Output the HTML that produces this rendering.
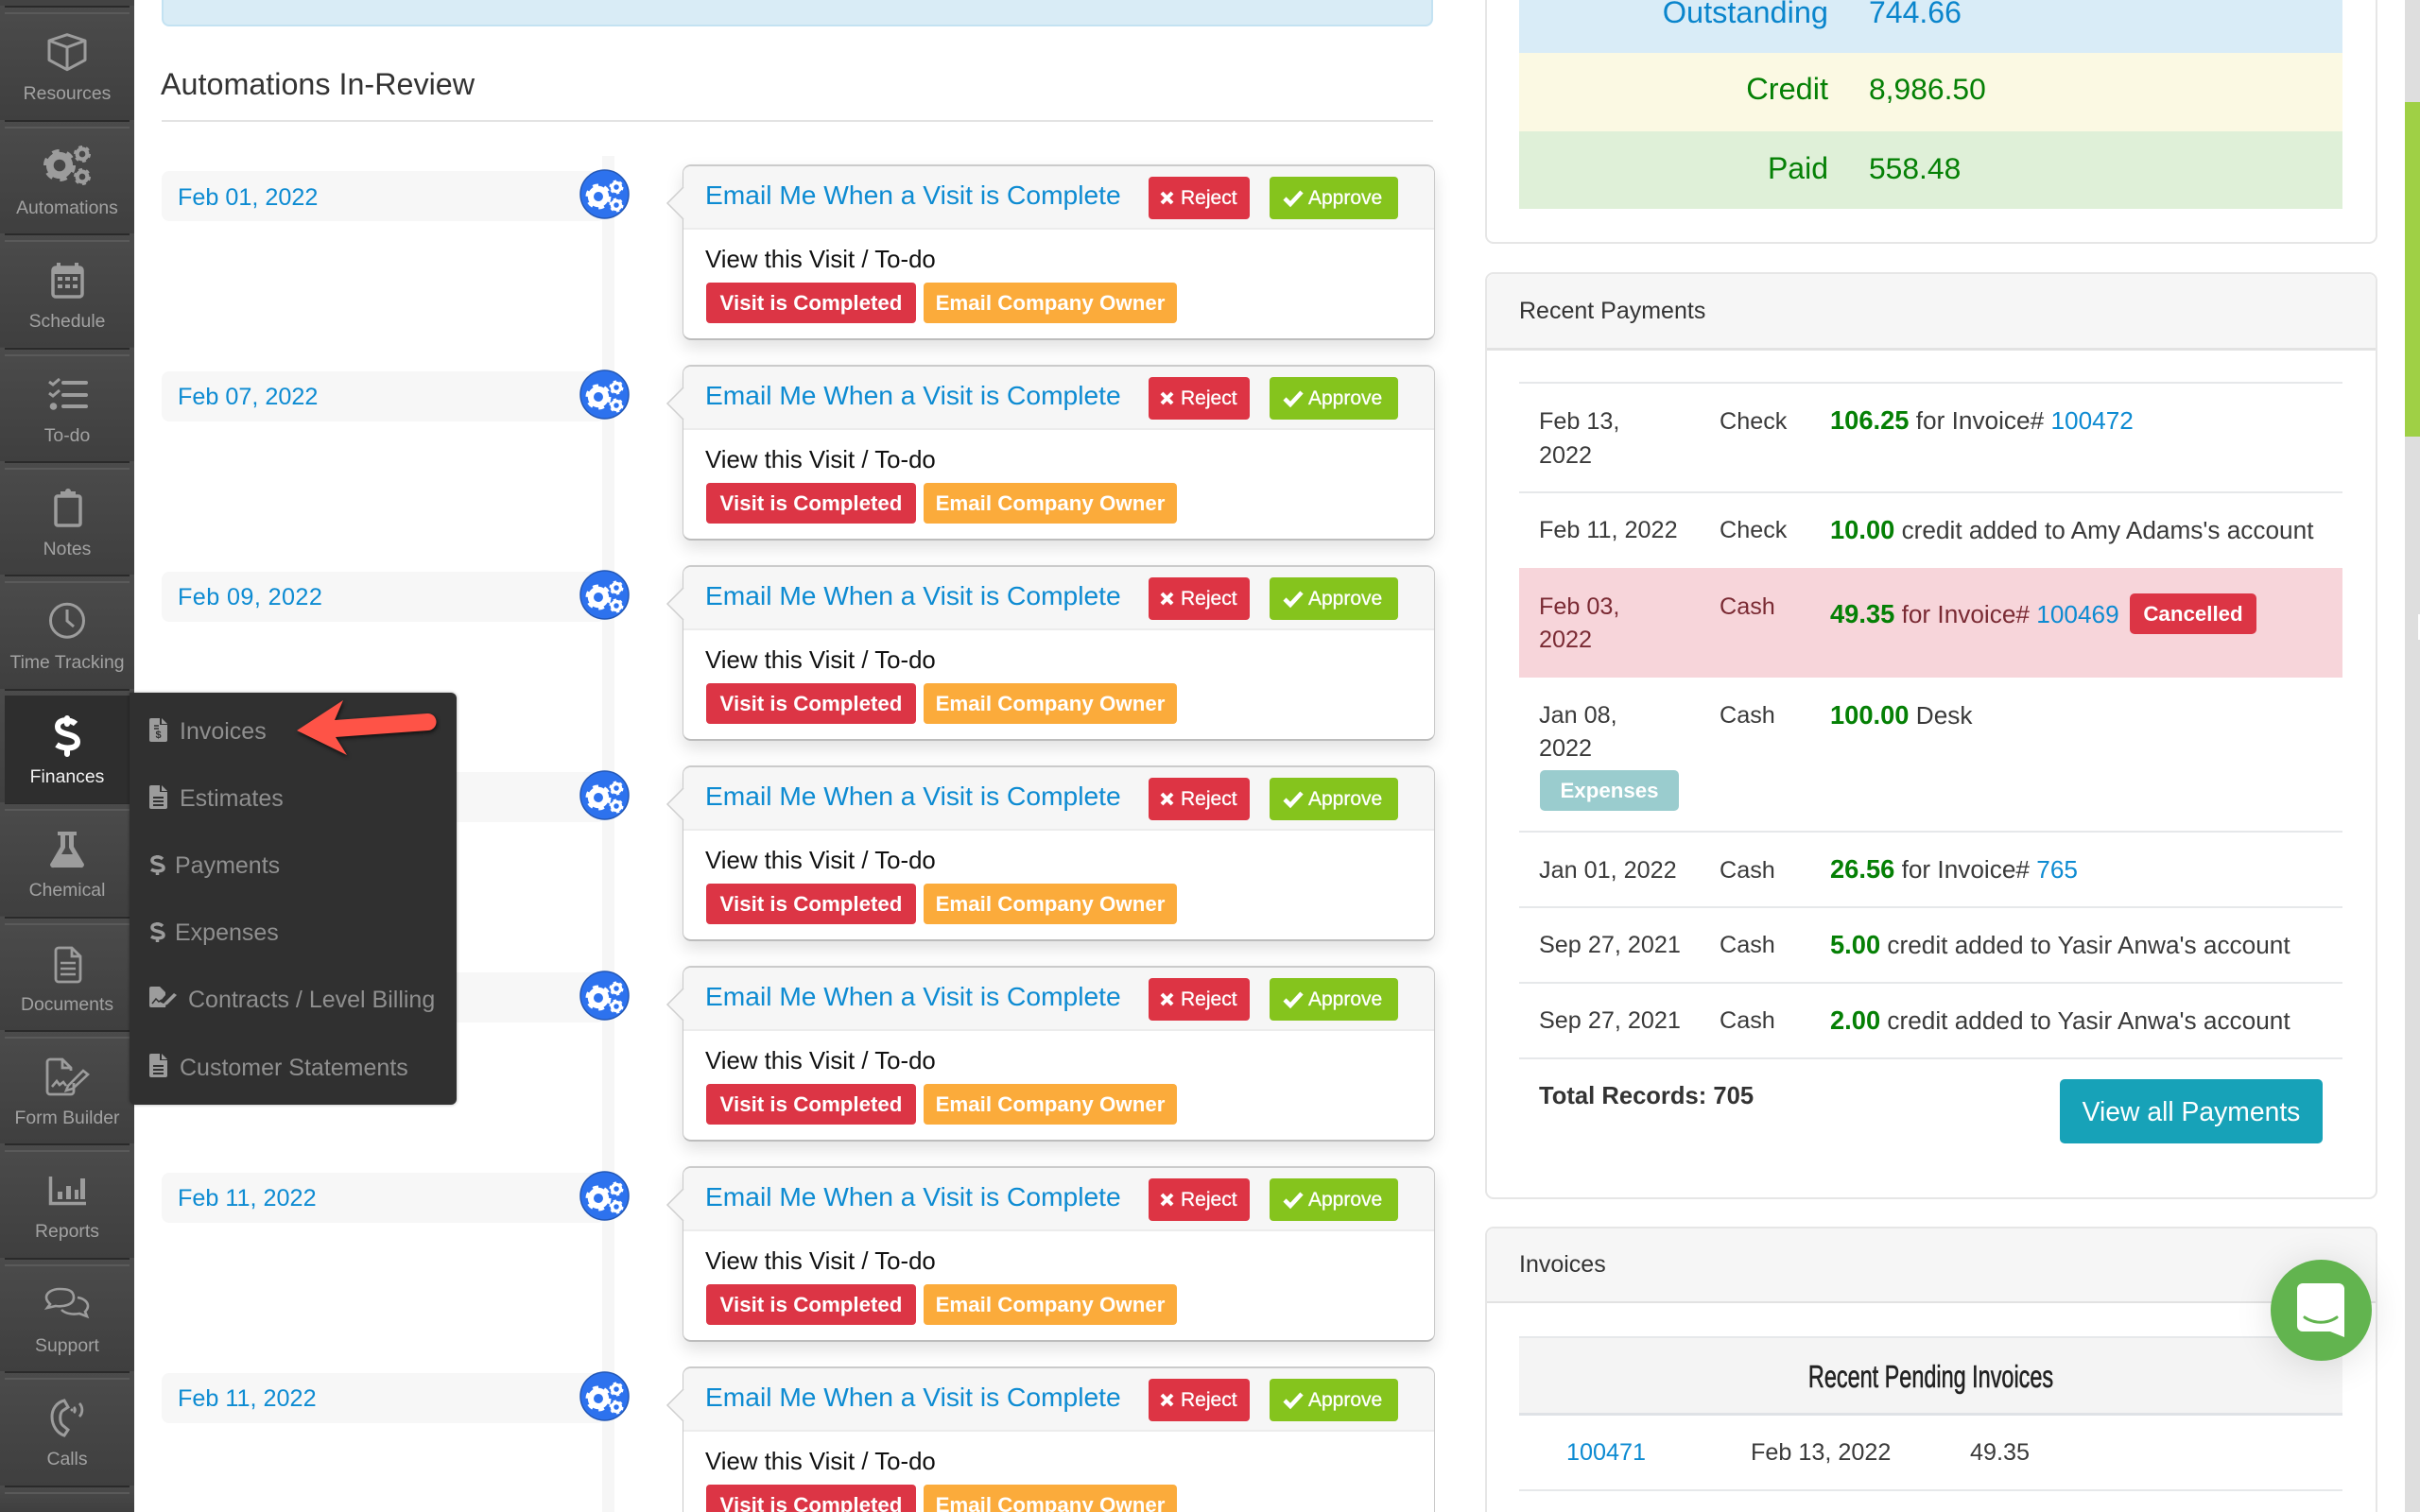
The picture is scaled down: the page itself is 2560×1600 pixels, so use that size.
<!DOCTYPE html>
<html><head><meta charset="utf-8"><title>Automations In-Review</title>
<style>
html,body{margin:0;padding:0;background:#fff;width:2560px;height:1600px;overflow:hidden}
#root{position:relative;width:2560px;height:1600px;overflow:hidden;font-family:"Liberation Sans",sans-serif;color:#3a3a3a}
.a,.t{position:absolute;white-space:nowrap}
.t{line-height:40px}
a{color:#0d8bd2;text-decoration:none}
#side{position:absolute;left:0;top:0;width:142px;height:1600px;background:#434343}
.si{position:absolute;left:0;width:142px;height:120.4px;background:linear-gradient(#4b4b4b,#3f3f3f)}
.si:before{content:"";position:absolute;left:5px;right:5px;top:0;height:2px;background:#2a2a2a}
.si:after{content:"";position:absolute;left:5px;right:5px;top:7px;height:2px;background:#5a5a5a}
.si span{position:absolute;left:0;width:142px;top:80px;text-align:center;font-size:19.4px;line-height:26px;color:#a2a2a2}
.si svg{position:absolute;left:0;top:0}
#act{position:absolute;left:5px;top:736px;width:132px;height:114px;background:#2e2e2e}
#act span{position:absolute;left:0;width:132px;top:72px;text-align:center;font-size:19.4px;line-height:28px;color:#f2f2f2}
#sub{position:absolute;left:137px;top:733px;width:346px;height:436px;background:#303030;border-radius:0 6px 6px 6px;box-shadow:0 0 3px rgba(0,0,0,.35)}
.m{position:absolute;font-size:25px;line-height:36px;color:#8f8f8f;white-space:nowrap;margin-top:1px}
.bar{position:absolute;left:171px;width:469px;height:53px;background:#f7f7f7;border-radius:8px}
.d{position:absolute;left:188px;font-size:25.2px;line-height:40px;color:#0d8bd2;margin-top:1px}
.ic{position:absolute;left:613px;width:53px;height:53px}
.card{position:absolute;left:722px;width:796px;height:186px;box-sizing:border-box;background:#fff;border:1px solid #c9c9c9;border-top:2px solid #cbcbcb;border-bottom:2px solid #bdbdbd;border-radius:9px;box-shadow:0 8px 18px rgba(0,0,0,.12)}
.hd{position:absolute;left:0;right:0;top:0;height:65px;background:#f6f6f6;border-bottom:2px solid #ececec;border-radius:8px 8px 0 0}
.ti{position:absolute;left:23px;top:10px;font-size:28.2px;line-height:40px;color:#0d8bd2;white-space:nowrap}
.bt{position:absolute;top:11px;height:45px;border-radius:4px;color:#fff;font-size:21px;line-height:45px;-webkit-text-stroke:.3px #fff;white-space:nowrap}
.rj{left:492px;width:107px;background:#dd3444}
.ap{left:620px;width:136px;background:#85c41d}
.bt svg{position:absolute;top:0;left:0}
.vw{position:absolute;left:23px;top:79px;font-size:25.8px;line-height:40px;color:#111;white-space:nowrap}
.bg{position:absolute;top:123px;height:43px;border-radius:4px;color:#fff;font-weight:bold;font-size:22.3px;line-height:43px;text-align:center;white-space:nowrap}
.b1{left:24px;width:222px;background:#dc3545}
.b2{left:254px;width:268px;background:#fbab3b}
.nub{position:absolute;left:-19px;top:19px}
.pn{position:absolute;left:1571px;width:944px;box-sizing:border-box;border:2px solid #e6e6e6;background:#fff}
.ph{position:absolute;left:0;right:0;top:0;background:#f6f6f6;border-bottom:3px solid #e2e2e2}
.ln{position:absolute;left:1607px;width:871px;height:2px;background:#e6e8ea}
.g{color:#058005;font-weight:bold;font-size:27.3px}
.f{font-size:25.2px;margin-top:1px}
.x{font-size:26.2px;margin-top:1px}
</style></head><body><div id="root">

<svg width="0" height="0" style="position:absolute"><defs>
<g id="gear" fill="none" stroke="currentColor"><circle r=".6" stroke-width=".46"/><circle r=".88" stroke-width=".24" stroke-dasharray=".44 .48"/></g>
<g id="file"><path d="M0 2a2 2 0 0 1 2-2h9v7h8v16a2 2 0 0 1-2 2H2a2 2 0 0 1-2-2zM13 0l6 6h-6z" fill="#9c9c9c"/></g>
</defs></svg>

<div id="side">
<div class="si" style="top:6.3px"><svg width="142" height="120"><path d="M52 37 71 30.7 90 37V57.5L71 67.7 52 57.5ZM52 37 71 44 90 37M71 44V67.7" fill="none" stroke="#9c9c9c" stroke-width="3" stroke-linejoin="round"/></svg><span>Resources</span></div>
<div class="si" style="top:126.7px"><svg width="142" height="120" style="color:#9c9c9c"><use href="#gear" transform="translate(63 48) scale(17)"/><use href="#gear" transform="translate(87 36) scale(9)"/><use href="#gear" transform="translate(87 60) scale(9)"/></svg><span>Automations</span></div>
<div class="si" style="top:247px"><svg width="142" height="120"><rect x="56" y="36" width="31" height="31" rx="3" fill="none" stroke="#9c9c9c" stroke-width="3.5"/><rect x="56" y="36" width="31" height="7" fill="#9c9c9c"/><path d="M62 31v6M81 31v6" stroke="#9c9c9c" stroke-width="4"/><path d="M61 48h5M69 48h5M77 48h5M61 56h5M69 56h5M77 56h5" stroke="#9c9c9c" stroke-width="4"/></svg><span>Schedule</span></div>
<div class="si" style="top:367.5px"><svg width="142" height="120"><path d="M67 37h24M67 50h24M67 62h24" stroke="#9c9c9c" stroke-width="4" stroke-linecap="round"/><path d="M52 36l4 3 7-6M52 48l4 3 7-6" fill="none" stroke="#9c9c9c" stroke-width="3"/><circle cx="56.5" cy="62" r="3.8" fill="#9c9c9c"/></svg><span>To-do</span></div>
<div class="si" style="top:488px"><svg width="142" height="120"><rect x="59" y="37" width="26" height="31" rx="2" fill="none" stroke="#9c9c9c" stroke-width="3.5"/><path d="M64 38v-6h5a3 3 0 0 1 6 0h5v6z" fill="#9c9c9c"/></svg><span>Notes</span></div>
<div class="si" style="top:608.3px"><svg width="142" height="120"><circle cx="71" cy="48.7" r="17.5" fill="none" stroke="#9c9c9c" stroke-width="3"/><path d="M71 37v12l7 6" fill="none" stroke="#9c9c9c" stroke-width="3"/></svg><span>Time Tracking</span></div>
<div class="si" style="top:728.7px"></div>
<div class="si" style="top:849px"><svg width="142" height="120"><path d="M61 31h20v4h-3v12l10 17a3 3 0 0 1-3 5H57a3 3 0 0 1-3-5l10-17V35h-3z" fill="#9c9c9c"/><path d="M69 35v13l-4 7h12l-4-7V35z" fill="#4a4a4a"/><path d="M64 56h14l6 10H58z" fill="#9c9c9c"/></svg><span>Chemical</span></div>
<div class="si" style="top:969.5px"><svg width="142" height="120"><path d="M59 36a3 3 0 0 1 3-3h14l9 9v24a3 3 0 0 1-3 3H62a3 3 0 0 1-3-3zM76 33v9h9" fill="none" stroke="#9c9c9c" stroke-width="2.8"/><path d="M64 49h16M64 55h16M64 61h16" stroke="#9c9c9c" stroke-width="2.5"/></svg><span>Documents</span></div>
<div class="si" style="top:1090px"><svg width="142" height="120"><path d="M78 56v9a3 3 0 0 1-3 3H53a3 3 0 0 1-3-3V34a3 3 0 0 1 3-3h13l9 9v3M66 31v9h9" fill="none" stroke="#9c9c9c" stroke-width="2.8"/><path d="M72 59 88 43l5 4-16 15-7 2zM55 60l5-6 3 4 4-3 3 4" fill="none" stroke="#9c9c9c" stroke-width="2.6"/></svg><span>Form Builder</span></div>
<div class="si" style="top:1210.3px"><svg width="142" height="120"><path d="M53.5 35v28.5H91" fill="none" stroke="#9c9c9c" stroke-width="3.5"/><path d="M61 51h5v8h-5zM70 45h5v14h-5zM79 49h4v10h-4zM85 37h5v22h-5z" fill="#9c9c9c"/></svg><span>Reports</span></div>
<div class="si" style="top:1330.7px"><svg width="142" height="120"><path d="M63 33c-8 0-14 4-14 9 0 3 2 5 4 7l-3 4 9-2c8 1 19-1 19-9s-7-9-15-9z" fill="none" stroke="#9c9c9c" stroke-width="2.6"/><path d="M82 42c7 1 11 5 11 9 0 3-2 5-3 6l2 5-8-3c-5 1-14 1-19-4" fill="none" stroke="#9c9c9c" stroke-width="2.6"/></svg><span>Support</span></div>
<div class="si" style="top:1451px;height:120.5px"><svg width="142" height="120"><path d="M68 31c-8 2-13 9-13 17 0 10 6 18 13 20l4-6-6-5c-3-3-3-12 0-15l6-4-4-7z" fill="none" stroke="#9c9c9c" stroke-width="3"/><path d="M78 38a4 4 0 0 1 0 6M84 34a10 10 0 0 1 0 14" fill="none" stroke="#9c9c9c" stroke-width="2.8"/><circle cx="76" cy="41" r="1.5" fill="#9c9c9c"/></svg><span>Calls</span></div>
<div class="si" style="top:1571.5px;height:28.5px"></div>
<div id="act"><svg width="132" height="72" style="position:absolute;left:0;top:0"><path d="M75 30c-5-5-19-6-19 3 0 10 21 6 21 16 0 8-15 8-22 3" fill="none" stroke="#fff" stroke-width="6"/><path d="M66 24v6M66 56v6" stroke="#fff" stroke-width="6" stroke-linecap="round"/></svg><span>Finances</span></div>
</div>

<!-- alert -->
<div class="a" style="left:171px;top:-10px;width:1345px;height:38px;box-sizing:border-box;background:#d9ecf6;border:2px solid #c3e2f2;border-radius:8px"></div>
<div class="t" style="left:170px;top:69px;font-size:32.3px;color:#333">Automations In-Review</div>
<div class="a" style="left:171px;top:127px;width:1345px;height:2px;background:#e3e3e3"></div>
<div class="a" style="left:637px;top:165px;width:13px;height:1435px;background:#f6f6f6"></div>

<!-- date bars -->
<div class="bar" style="top:181px"></div><div class="d" style="top:188px">Feb 01, 2022</div>
<div class="bar" style="top:393px"></div><div class="d" style="top:399px">Feb 07, 2022</div>
<div class="bar" style="top:605px"></div><div class="d" style="top:611px;letter-spacing:.4px">Feb 09, 2022</div>
<div class="bar" style="top:817px"></div>
<div class="bar" style="top:1029px"></div>
<div class="bar" style="top:1241px"></div><div class="d" style="top:1247px">Feb 11, 2022</div>
<div class="bar" style="top:1453px"></div><div class="d" style="top:1459px">Feb 11, 2022</div>

<!-- circle icons -->
<svg class="ic" style="top:179px" viewBox="0 0 53 53"><circle cx="26.5" cy="26.5" r="25.5" fill="#2d72ee" stroke="#2357b5" stroke-width="1.5"/><g style="color:#fff"><use href="#gear" transform="translate(20 29) scale(13.5)"/><use href="#gear" transform="translate(39 19) scale(7.5)"/><use href="#gear" transform="translate(39 38) scale(7.5)"/></g></svg>
<svg class="ic" style="top:391px" viewBox="0 0 53 53"><circle cx="26.5" cy="26.5" r="25.5" fill="#2d72ee" stroke="#2357b5" stroke-width="1.5"/><g style="color:#fff"><use href="#gear" transform="translate(20 29) scale(13.5)"/><use href="#gear" transform="translate(39 19) scale(7.5)"/><use href="#gear" transform="translate(39 38) scale(7.5)"/></g></svg>
<svg class="ic" style="top:603px" viewBox="0 0 53 53"><circle cx="26.5" cy="26.5" r="25.5" fill="#2d72ee" stroke="#2357b5" stroke-width="1.5"/><g style="color:#fff"><use href="#gear" transform="translate(20 29) scale(13.5)"/><use href="#gear" transform="translate(39 19) scale(7.5)"/><use href="#gear" transform="translate(39 38) scale(7.5)"/></g></svg>
<svg class="ic" style="top:815px" viewBox="0 0 53 53"><circle cx="26.5" cy="26.5" r="25.5" fill="#2d72ee" stroke="#2357b5" stroke-width="1.5"/><g style="color:#fff"><use href="#gear" transform="translate(20 29) scale(13.5)"/><use href="#gear" transform="translate(39 19) scale(7.5)"/><use href="#gear" transform="translate(39 38) scale(7.5)"/></g></svg>
<svg class="ic" style="top:1027px" viewBox="0 0 53 53"><circle cx="26.5" cy="26.5" r="25.5" fill="#2d72ee" stroke="#2357b5" stroke-width="1.5"/><g style="color:#fff"><use href="#gear" transform="translate(20 29) scale(13.5)"/><use href="#gear" transform="translate(39 19) scale(7.5)"/><use href="#gear" transform="translate(39 38) scale(7.5)"/></g></svg>
<svg class="ic" style="top:1239px" viewBox="0 0 53 53"><circle cx="26.5" cy="26.5" r="25.5" fill="#2d72ee" stroke="#2357b5" stroke-width="1.5"/><g style="color:#fff"><use href="#gear" transform="translate(20 29) scale(13.5)"/><use href="#gear" transform="translate(39 19) scale(7.5)"/><use href="#gear" transform="translate(39 38) scale(7.5)"/></g></svg>
<svg class="ic" style="top:1451px" viewBox="0 0 53 53"><circle cx="26.5" cy="26.5" r="25.5" fill="#2d72ee" stroke="#2357b5" stroke-width="1.5"/><g style="color:#fff"><use href="#gear" transform="translate(20 29) scale(13.5)"/><use href="#gear" transform="translate(39 19) scale(7.5)"/><use href="#gear" transform="translate(39 38) scale(7.5)"/></g></svg>

<!-- cards -->
<div class="card" style="top:174px"><div class="hd"></div><svg class="nub" width="20" height="40"><path d="M19 3 2 20 19 37z" fill="#f6f6f6"/><path d="M19 3 2 20 19 37" fill="none" stroke="#cfcfcf" stroke-width="1.5"/></svg><div class="ti">Email Me When a Visit is Complete</div><div class="bt rj"><svg width="40" height="45"><path d="M14 17l11 11M25 17 14 28" stroke="#fff" stroke-width="4"/></svg><span style="position:absolute;left:34px">Reject</span></div><div class="bt ap"><svg width="40" height="45"><path d="M16 23l6 6 12-13" fill="none" stroke="#fff" stroke-width="4.5"/></svg><span style="position:absolute;left:41px">Approve</span></div><div class="vw">View this Visit / To-do</div><div class="bg b1">Visit is Completed</div><div class="bg b2">Email Company Owner</div></div>
<div class="card" style="top:386px"><div class="hd"></div><svg class="nub" width="20" height="40"><path d="M19 3 2 20 19 37z" fill="#f6f6f6"/><path d="M19 3 2 20 19 37" fill="none" stroke="#cfcfcf" stroke-width="1.5"/></svg><div class="ti">Email Me When a Visit is Complete</div><div class="bt rj"><svg width="40" height="45"><path d="M14 17l11 11M25 17 14 28" stroke="#fff" stroke-width="4"/></svg><span style="position:absolute;left:34px">Reject</span></div><div class="bt ap"><svg width="40" height="45"><path d="M16 23l6 6 12-13" fill="none" stroke="#fff" stroke-width="4.5"/></svg><span style="position:absolute;left:41px">Approve</span></div><div class="vw">View this Visit / To-do</div><div class="bg b1">Visit is Completed</div><div class="bg b2">Email Company Owner</div></div>
<div class="card" style="top:598px"><div class="hd"></div><svg class="nub" width="20" height="40"><path d="M19 3 2 20 19 37z" fill="#f6f6f6"/><path d="M19 3 2 20 19 37" fill="none" stroke="#cfcfcf" stroke-width="1.5"/></svg><div class="ti">Email Me When a Visit is Complete</div><div class="bt rj"><svg width="40" height="45"><path d="M14 17l11 11M25 17 14 28" stroke="#fff" stroke-width="4"/></svg><span style="position:absolute;left:34px">Reject</span></div><div class="bt ap"><svg width="40" height="45"><path d="M16 23l6 6 12-13" fill="none" stroke="#fff" stroke-width="4.5"/></svg><span style="position:absolute;left:41px">Approve</span></div><div class="vw">View this Visit / To-do</div><div class="bg b1">Visit is Completed</div><div class="bg b2">Email Company Owner</div></div>
<div class="card" style="top:810px"><div class="hd"></div><svg class="nub" width="20" height="40"><path d="M19 3 2 20 19 37z" fill="#f6f6f6"/><path d="M19 3 2 20 19 37" fill="none" stroke="#cfcfcf" stroke-width="1.5"/></svg><div class="ti">Email Me When a Visit is Complete</div><div class="bt rj"><svg width="40" height="45"><path d="M14 17l11 11M25 17 14 28" stroke="#fff" stroke-width="4"/></svg><span style="position:absolute;left:34px">Reject</span></div><div class="bt ap"><svg width="40" height="45"><path d="M16 23l6 6 12-13" fill="none" stroke="#fff" stroke-width="4.5"/></svg><span style="position:absolute;left:41px">Approve</span></div><div class="vw">View this Visit / To-do</div><div class="bg b1">Visit is Completed</div><div class="bg b2">Email Company Owner</div></div>
<div class="card" style="top:1022px"><div class="hd"></div><svg class="nub" width="20" height="40"><path d="M19 3 2 20 19 37z" fill="#f6f6f6"/><path d="M19 3 2 20 19 37" fill="none" stroke="#cfcfcf" stroke-width="1.5"/></svg><div class="ti">Email Me When a Visit is Complete</div><div class="bt rj"><svg width="40" height="45"><path d="M14 17l11 11M25 17 14 28" stroke="#fff" stroke-width="4"/></svg><span style="position:absolute;left:34px">Reject</span></div><div class="bt ap"><svg width="40" height="45"><path d="M16 23l6 6 12-13" fill="none" stroke="#fff" stroke-width="4.5"/></svg><span style="position:absolute;left:41px">Approve</span></div><div class="vw">View this Visit / To-do</div><div class="bg b1">Visit is Completed</div><div class="bg b2">Email Company Owner</div></div>
<div class="card" style="top:1234px"><div class="hd"></div><svg class="nub" width="20" height="40"><path d="M19 3 2 20 19 37z" fill="#f6f6f6"/><path d="M19 3 2 20 19 37" fill="none" stroke="#cfcfcf" stroke-width="1.5"/></svg><div class="ti">Email Me When a Visit is Complete</div><div class="bt rj"><svg width="40" height="45"><path d="M14 17l11 11M25 17 14 28" stroke="#fff" stroke-width="4"/></svg><span style="position:absolute;left:34px">Reject</span></div><div class="bt ap"><svg width="40" height="45"><path d="M16 23l6 6 12-13" fill="none" stroke="#fff" stroke-width="4.5"/></svg><span style="position:absolute;left:41px">Approve</span></div><div class="vw">View this Visit / To-do</div><div class="bg b1">Visit is Completed</div><div class="bg b2">Email Company Owner</div></div>
<div class="card" style="top:1446px;height:154px;border-bottom:0;border-radius:9px 9px 0 0;box-shadow:none"><div class="hd"></div><svg class="nub" width="20" height="40"><path d="M19 3 2 20 19 37z" fill="#f6f6f6"/><path d="M19 3 2 20 19 37" fill="none" stroke="#cfcfcf" stroke-width="1.5"/></svg><div class="ti">Email Me When a Visit is Complete</div><div class="bt rj"><svg width="40" height="45"><path d="M14 17l11 11M25 17 14 28" stroke="#fff" stroke-width="4"/></svg><span style="position:absolute;left:34px">Reject</span></div><div class="bt ap"><svg width="40" height="45"><path d="M16 23l6 6 12-13" fill="none" stroke="#fff" stroke-width="4.5"/></svg><span style="position:absolute;left:41px">Approve</span></div><div class="vw">View this Visit / To-do</div><div class="bg b1" style="height:29px;overflow:hidden;border-radius:4px 4px 0 0">Visit is Completed</div><div class="bg b2" style="height:29px;overflow:hidden;border-radius:4px 4px 0 0">Email Company Owner</div></div>

<!-- submenu -->
<div id="sub">
<div class="m" style="left:53px;top:22px">Invoices</div>
<div class="m" style="left:53px;top:93px">Estimates</div>
<div class="m" style="left:48px;top:164px">Payments</div>
<div class="m" style="left:48px;top:235px">Expenses</div>
<div class="m" style="left:62px;top:306px">Contracts / Level Billing</div>
<div class="m" style="left:53px;top:378px">Customer Statements</div>
</div>
<svg class="a" style="left:137px;top:733px" width="346" height="436">
<use href="#file" transform="translate(21 27)"/><path d="M26 35h5M26 38h5" stroke="#303030" stroke-width="1.5"/><text x="30.5" y="48" font-family="Liberation Sans" font-size="11" font-weight="bold" fill="#303030" text-anchor="middle">$</text>
<use href="#file" transform="translate(21 98)"/><path d="M25 111h11M25 115h11M25 119h11" stroke="#303030" stroke-width="2"/>
<path d="M35 176c-3-3-11-3-11 1.5 0 5 12 3 12 8 0 4-9 4-13 1.5M29.5 172v3M29.5 190v3" fill="none" stroke="#9c9c9c" stroke-width="3.5"/>
<path d="M35 247c-3-3-11-3-11 1.5 0 5 12 3 12 8 0 4-9 4-13 1.5M29.5 243v3M29.5 261v3" fill="none" stroke="#9c9c9c" stroke-width="3.5"/>
<path d="M21 313a2 2 0 0 1 2-2h9l6 6v3l-6 7 4 2 3-2-1 6H23a2 2 0 0 1-2-2z" fill="#9c9c9c"/><path d="M37 328 47 318l3 2-10 10-5 1z" fill="#9c9c9c"/><path d="M24 329l4-5 3 3 3-2" stroke="#303030" stroke-width="1.5" fill="none"/>
<use href="#file" transform="translate(21 382)"/><path d="M25 395h11M25 399h11M25 403h11" stroke="#303030" stroke-width="2"/>
</svg>
<!-- red arrow -->
<svg class="a" style="left:300px;top:730px;filter:drop-shadow(1px 2px 2px rgba(0,0,0,.7))" width="180" height="80"><path d="M14 43 63 11 54 32 152 25a9 9 0 0 1 1 18L55 50 67 69Z" fill="#fe5347"/></svg>

<!-- right column -->
<div class="pn" style="top:-20px;height:278px;border-radius:0 0 9px 9px"></div>
<div class="a" style="left:1607px;top:0;width:871px;height:56px;background:#d9ecf7"></div>
<div class="a" style="left:1607px;top:56px;width:871px;height:83px;background:#fbf9e3"></div>
<div class="a" style="left:1607px;top:139px;width:871px;height:82px;background:#dff0d8"></div>
<div class="t" style="right:626px;top:-7px;font-size:32.5px;color:#0a85cc">Outstanding</div>
<div class="t" style="left:1977px;top:-7px;font-size:32px;color:#0a85cc">744.66</div>
<div class="t" style="right:626px;top:74px;font-size:32.5px;color:#058005">Credit</div>
<div class="t" style="left:1977px;top:74px;font-size:31.8px;color:#058005">8,986.50</div>
<div class="t" style="right:626px;top:158px;font-size:32px;color:#058005">Paid</div>
<div class="t" style="left:1977px;top:158px;font-size:31.8px;color:#058005">558.48</div>

<div class="pn" style="top:288px;height:981px;border-radius:9px"><div class="ph" style="height:78px;border-radius:8px 8px 0 0"></div></div>
<div class="t" style="left:1607px;top:309px;font-size:25px;color:#333">Recent Payments</div>
<div class="ln" style="top:404px"></div>
<div class="t f" style="left:1628px;top:425px">Feb 13,</div><div class="t f" style="left:1628px;top:461px">2022</div>
<div class="t f" style="left:1819px;top:425px">Check</div>
<div class="t x" style="left:1936px;top:424px"><span class="g">106.25</span> for Invoice# <a>100472</a></div>
<div class="ln" style="top:520px"></div>
<div class="t f" style="left:1628px;top:540px">Feb 11, 2022</div>
<div class="t f" style="left:1819px;top:540px">Check</div>
<div class="t x" style="left:1936px;top:540px"><span class="g">10.00</span> credit added to Amy Adams's account</div>
<div class="a" style="left:1607px;top:601px;width:871px;height:116px;background:#f7d5da"></div>
<div class="t f" style="left:1628px;top:621px;color:#7a2a33">Feb 03,</div><div class="t f" style="left:1628px;top:656px;color:#7a2a33">2022</div>
<div class="t f" style="left:1819px;top:621px;color:#7a2a33">Cash</div>
<div class="t x" style="left:1936px;top:629px;color:#7a2a33"><span class="g">49.35</span> for Invoice# <a>100469</a></div>
<div class="a" style="left:2253px;top:628px;width:134px;height:43px;background:#dc3545;border-radius:5px;color:#fff;font-weight:bold;font-size:22.3px;line-height:43px;text-align:center">Cancelled</div>
<div class="t f" style="left:1628px;top:736px">Jan 08,</div><div class="t f" style="left:1628px;top:771px">2022</div>
<div class="t f" style="left:1819px;top:736px">Cash</div>
<div class="t x" style="left:1936px;top:736px"><span class="g">100.00</span> Desk</div>
<div class="a" style="left:1629px;top:815px;width:147px;height:43px;background:#9accce;border-radius:5px;color:#fff;font-weight:bold;font-size:22.3px;line-height:43px;text-align:center">Expenses</div>
<div class="ln" style="top:879px"></div>
<div class="t f" style="left:1628px;top:900px">Jan 01, 2022</div>
<div class="t f" style="left:1819px;top:900px">Cash</div>
<div class="t x" style="left:1936px;top:899px"><span class="g">26.56</span> for Invoice# <a>765</a></div>
<div class="ln" style="top:959px"></div>
<div class="t f" style="left:1628px;top:979px">Sep 27, 2021</div>
<div class="t f" style="left:1819px;top:979px">Cash</div>
<div class="t x" style="left:1936px;top:979px"><span class="g">5.00</span> credit added to Yasir Anwa's account</div>
<div class="ln" style="top:1039px"></div>
<div class="t f" style="left:1628px;top:1059px">Sep 27, 2021</div>
<div class="t f" style="left:1819px;top:1059px">Cash</div>
<div class="t x" style="left:1936px;top:1059px"><span class="g">2.00</span> credit added to Yasir Anwa's account</div>
<div class="ln" style="top:1119px"></div>
<div class="t" style="left:1628px;top:1140px;font-weight:bold;font-size:25.6px;color:#333">Total Records: 705</div>
<div class="a" style="left:2179px;top:1142px;width:278px;height:68px;background:#17a2b8;border-radius:5px;color:#fff;font-size:28.3px;line-height:69px;text-align:center">View all Payments</div>

<div class="pn" style="top:1298px;height:302px;border-bottom:0;border-radius:9px 9px 0 0"><div class="ph" style="height:77px;border-radius:8px 8px 0 0;border-bottom-width:2px"></div></div>
<div class="t" style="left:1607px;top:1318px;font-size:25px;color:#333">Invoices</div>
<div class="a" style="left:1607px;top:1414px;width:871px;height:2px;background:#e6e8ea"></div>
<div class="a" style="left:1607px;top:1416px;width:871px;height:79px;background:#f4f4f4;border-bottom:3px solid #dfe2e6"></div>
<div class="t" style="left:1607px;top:1437px;width:871px;text-align:center;color:#222"><span style="display:inline-block;font-size:33px;transform:scaleX(.71);-webkit-text-stroke:.6px #222">Recent Pending Invoices</span></div>
<div class="t f" style="left:1657px;top:1516px"><a>100471</a></div>
<div class="t f" style="left:1852px;top:1516px">Feb 13, 2022</div>
<div class="t f" style="left:2084px;top:1516px">49.35</div>
<div class="ln" style="top:1576px"></div>

<!-- scrollbar -->
<div class="a" style="left:2544px;top:0;width:16px;height:1600px;background:#dedede"></div>
<div class="a" style="left:2544px;top:108px;width:16px;height:354px;background:#9fd045"></div>
<div class="a" style="left:2558px;top:650px;width:2px;height:27px;background:#fff"></div>

<!-- chat -->
<div class="a" style="left:2402px;top:1333px;width:107px;height:107px;border-radius:50%;background:#62b44f;box-shadow:0 4px 40px rgba(0,0,0,.12)"></div>
<svg class="a" style="left:2420px;top:1350px" width="70" height="70"><path d="M10 14a6 6 0 0 1 6-6h38a6 6 0 0 1 6 6v51L45 59H16a6 6 0 0 1-6-6z" fill="#fff"/><path d="M18 44c10 7 24 7 34 0" fill="none" stroke="#62b44f" stroke-width="3" stroke-linecap="round"/></svg>

</div></body></html>
